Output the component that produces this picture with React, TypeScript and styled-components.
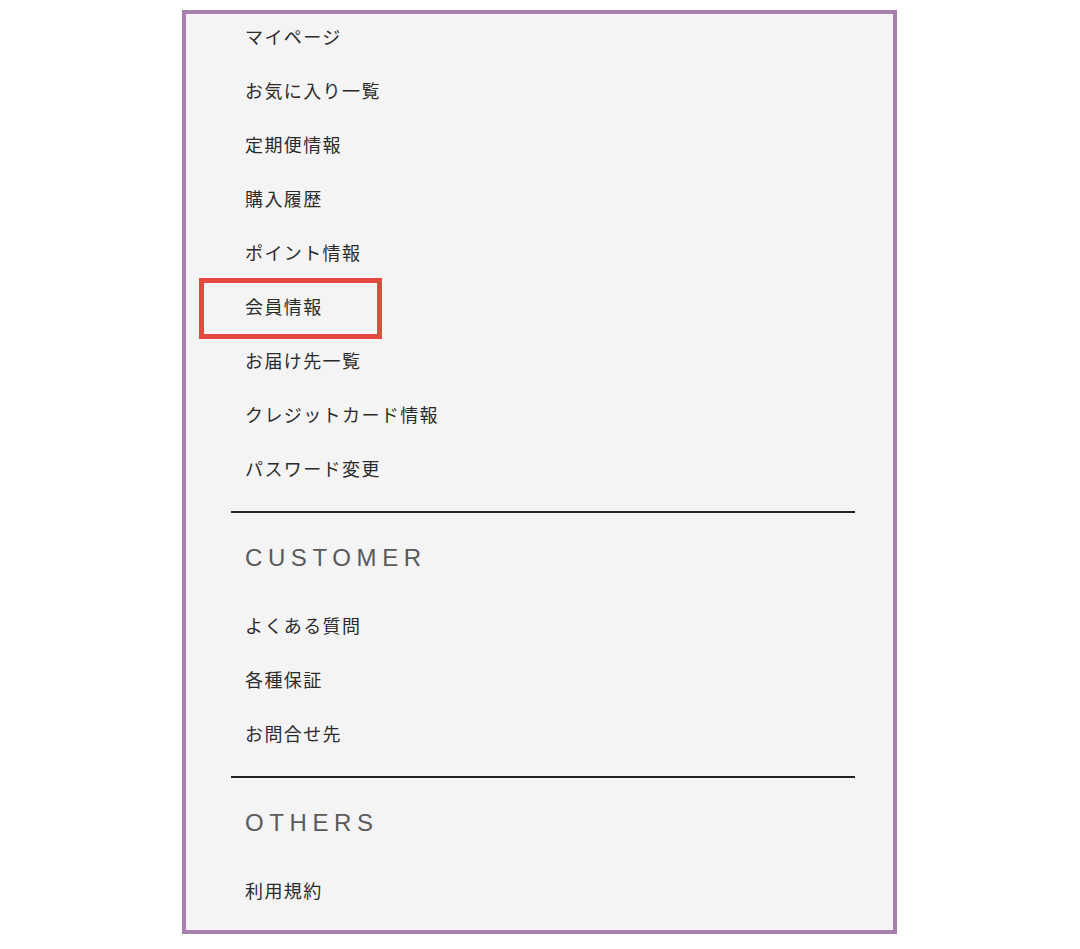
import React from "react";
import styled, { createGlobalStyle } from "styled-components";

const Global = createGlobalStyle`
  html, body { margin: 0; padding: 0; background: #ffffff; }
  body { font-family: "Noto Sans CJK JP", "Noto Sans", sans-serif; }
`;

const Page = styled.div`
  width: 1080px;
  height: 949px;
  padding: 10px 0 0 182px;
  box-sizing: border-box;
`;

const Frame = styled.div`
  width: 715px;
  height: 924px;
  box-sizing: border-box;
  border: 4px solid #a880ae;
  background: #f4f4f4;
  overflow: hidden;
  position: relative;
`;

const Menu = styled.nav`
  margin: -5px 38px 0 45px;
  display: flex;
  flex-direction: column;
`;

const Section = styled.ul`
  list-style: none;
  margin: 0;
  padding: 0;
`;

const Item = styled.li`
  position: relative;
  height: 54px;
  display: flex;
  align-items: center;
  padding-left: 14px;
  font-family: "Noto Sans CJK JP", sans-serif;
  font-size: 18px;
  letter-spacing: 1.4px;
  color: #2b2b2b;
`;

const Highlight = styled.span`
  position: absolute;
  left: -32px;
  top: -1px;
  width: 183px;
  height: 61px;
  box-sizing: border-box;
  border: 5px solid #e5483f;
  pointer-events: none;
`;

const Divider = styled.hr`
  margin: 16px 0 0 0;
  border: none;
  height: 2px;
  background: #222222;
`;

const Heading = styled.h2`
  margin: 0;
  padding: 30px 0 25px 14px;
  font-family: "Liberation Sans", Arial, sans-serif;
  font-weight: 400;
  font-size: 24px;
  line-height: 30px;
  letter-spacing: 5.6px;
  color: #5a5a5a;
`;

const account = [
  "マイページ",
  "お気に入り一覧",
  "定期便情報",
  "購入履歴",
  "ポイント情報",
  "会員情報",
  "お届け先一覧",
  "クレジットカード情報",
  "パスワード変更",
];
const customer = ["よくある質問", "各種保証", "お問合せ先"];
const others = ["利用規約"];

export default function App() {
  return (
    <>
      <Global />
      <Page>
        <Frame>
          <Menu>
            <Section>
              {account.map((t) => (
                <Item key={t}>
                  {t}
                  {t === "会員情報" && <Highlight />}
                </Item>
              ))}
            </Section>
            <Divider />
            <Heading>CUSTOMER</Heading>
            <Section>
              {customer.map((t) => (
                <Item key={t}>{t}</Item>
              ))}
            </Section>
            <Divider />
            <Heading>OTHERS</Heading>
            <Section>
              {others.map((t) => (
                <Item key={t}>{t}</Item>
              ))}
            </Section>
          </Menu>
        </Frame>
      </Page>
    </>
  );
}
